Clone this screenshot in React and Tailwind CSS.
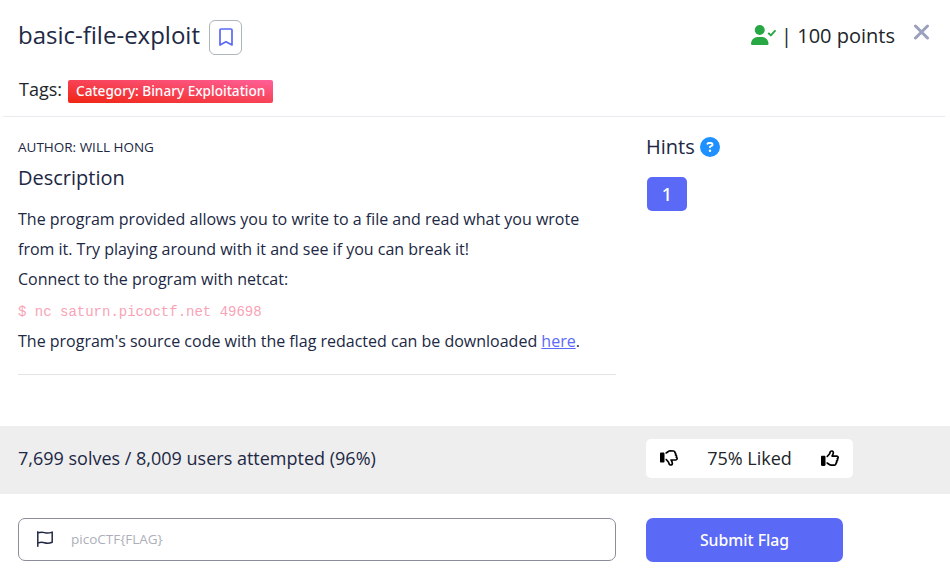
import { FaCircleQuestion, FaRegThumbsUp, FaRegThumbsDown } from "react-icons/fa6";

function BookmarkIcon() {
  return (
    <svg className="-mt-px ml-px h-[18px] w-[14px]" viewBox="0 0 14 18" fill="none" stroke="currentColor" strokeWidth="1.7" strokeLinejoin="round">
      <path d="M1 2a1 1 0 0 1 1-1h10a1 1 0 0 1 1 1v15l-6-3.200L1 17z" />
    </svg>
  );
}

function SolvedIcon() {
  return (
    <svg className="mt-[5px] h-5 w-[25px] text-[#28a745]" viewBox="0 0 640 512" fill="currentColor">
      <circle cx="224" cy="128" r="128" />
      <path d="M274.7 304H173.3C77.6 304 0 381.600 0 477.300C0 496.500 15.500 512 34.700 512H413.300C432.500 512 448 496.500 448 477.300C448 381.600 370.400 304 274.700 304z" />
      <path d="M458 216 508 266 614 152" fill="none" stroke="currentColor" strokeWidth="50" strokeLinecap="round" strokeLinejoin="round" />
    </svg>
  );
}

function FlagIcon() {
  return (
    <svg className="-mt-px h-4 w-4" viewBox="0 0 16 16" fill="none" stroke="currentColor" strokeWidth="1.5" strokeLinecap="round" strokeLinejoin="round">
      <path d="M.8.75v14.5M.8 1.900C3 1.100 5.200.8 7.500 1.600c2.700.9 4.800.7 7.700-.5v10.200c-2.700 1.200-5 1.400-7.700.5-2.300-.8-4.500-.5-6.700.3" />
    </svg>
  );
}

function Header() {
  return (
    <header className="mx-[3px] mr-[5px] h-[117px] border-b border-[#e9ecef] pl-[15px] pr-[15px]">
      <div className="flex items-start justify-between">
        <div className="flex items-center pt-5">
          <h1 className="-mt-[5px] text-2xl leading-8 text-[#212844]">basic-file-exploit</h1>
          <button className="ml-[9px] flex h-[35px] w-[33px] items-center justify-center rounded-md border border-[#adb5bd] text-[#5b69f7]">
            <BookmarkIcon />
          </button>
        </div>
        <div className="flex pt-5">
          <SolvedIcon />
          <span className="ml-[5px] mt-px text-xl leading-[30px] text-[#212529]">| 100 points</span>
          <svg className="ml-[19px] mt-1 h-4 w-4" viewBox="0 0 16 16" fill="none" stroke="#9aa0bd" strokeWidth="3" strokeLinecap="round">
            <path d="M1.500 2 13.500 14M13.500 2 1.500 14" />
          </svg>
        </div>
      </div>
      <div className="ml-px mt-[21px] flex items-start">
        <span className="text-lg leading-[27px] text-[#212529]">Tags:</span>
        <span className="ml-1.5 mt-1 h-[23px] rounded-xs bg-[linear-gradient(to_top_right,#f02412,#ff609a)] px-2 font-['Noto_Sans',sans-serif] text-[13.6px] font-medium leading-[22px] text-white">
          Category: Binary Exploitation
        </span>
      </div>
    </header>
  );
}

function Description() {
  return (
    <section className="w-[598px]">
      <p className="pt-5 text-[13.5px] leading-5">AUTHOR: WILL HONG</p>
      <h2 className="mt-[9px] text-xl leading-6">Description</h2>
      <div className="mt-[14px] text-base leading-[30px]">
        <p>
          The program provided allows you to write to a file and read what you wrote
          <br />
          from it. Try playing around with it and see if you can break it!
        </p>
        <p>Connect to the program with netcat:</p>
        <code className="block h-8 pt-[3px] font-['Liberation_Mono',monospace] text-sm leading-[30px] text-[#f9a3b6]">
          $ nc saturn.picoctf.net 49698
        </code>
        <p>
          The program's source code with the flag redacted can be downloaded{" "}
          <a className="text-[#5b69f7] underline" href="#">here</a>.
        </p>
      </div>
      <hr className="mt-[18px] border-[#e4e4e4]" />
    </section>
  );
}

function Hints() {
  return (
    <aside className="ml-[30px]">
      <h2 className="flex items-center gap-[5px] pt-[18px] text-xl leading-6">
        Hints <FaCircleQuestion className="text-[#1e90ff]" size={20} />
      </h2>
      <button className="ml-px mt-[18px] h-[34px] w-10 rounded-[5px] bg-[#5b69f7] font-['Noto_Sans',sans-serif] text-lg font-medium leading-[34px] text-white">1</button>
    </aside>
  );
}

export default function App() {
  return (
    <main className="h-[581px] w-[950px] overflow-hidden bg-white font-['Open_Sans',sans-serif] text-[#212844]">
      <Header />
      <div className="flex h-[309px] pl-[18px]">
        <Description />
        <Hints />
      </div>
      <div className="flex h-[68px] items-center bg-[#eeeeee] pl-[18px]">
        <p className="-mt-[5px] w-[628px] text-lg leading-7">7,699 solves / 8,009 users attempted (96%)</p>
        <div className="-mt-[3px] flex h-[39px] w-[207px] items-center justify-between rounded-[5px] bg-white px-[14px] text-[#212529]">
          <FaRegThumbsDown className="-mt-px text-black" size={18} />
          <span className="-mt-0.5 text-lg leading-7">75% Liked</span>
          <FaRegThumbsUp className="-mt-px text-black" size={18} />
        </div>
      </div>
      <form className="flex pl-[18px] pt-6">
        <label className="flex h-[43px] w-[598px] items-center rounded-[7px] border border-[#8b8d9b] pl-[18px]">
          <FlagIcon />
          <input className="ml-[18px] w-[400px] text-[13.5px] outline-none placeholder:text-[#acafb9]" placeholder="picoCTF{FLAG}" />
        </label>
        <button type="button" className="ml-[30px] h-11 w-[197px] rounded-[7px] bg-[#5b69f7] font-['Noto_Sans',sans-serif] text-[15.8px] font-medium leading-6 text-white">
          Submit Flag
        </button>
      </form>
    </main>
  );
}
